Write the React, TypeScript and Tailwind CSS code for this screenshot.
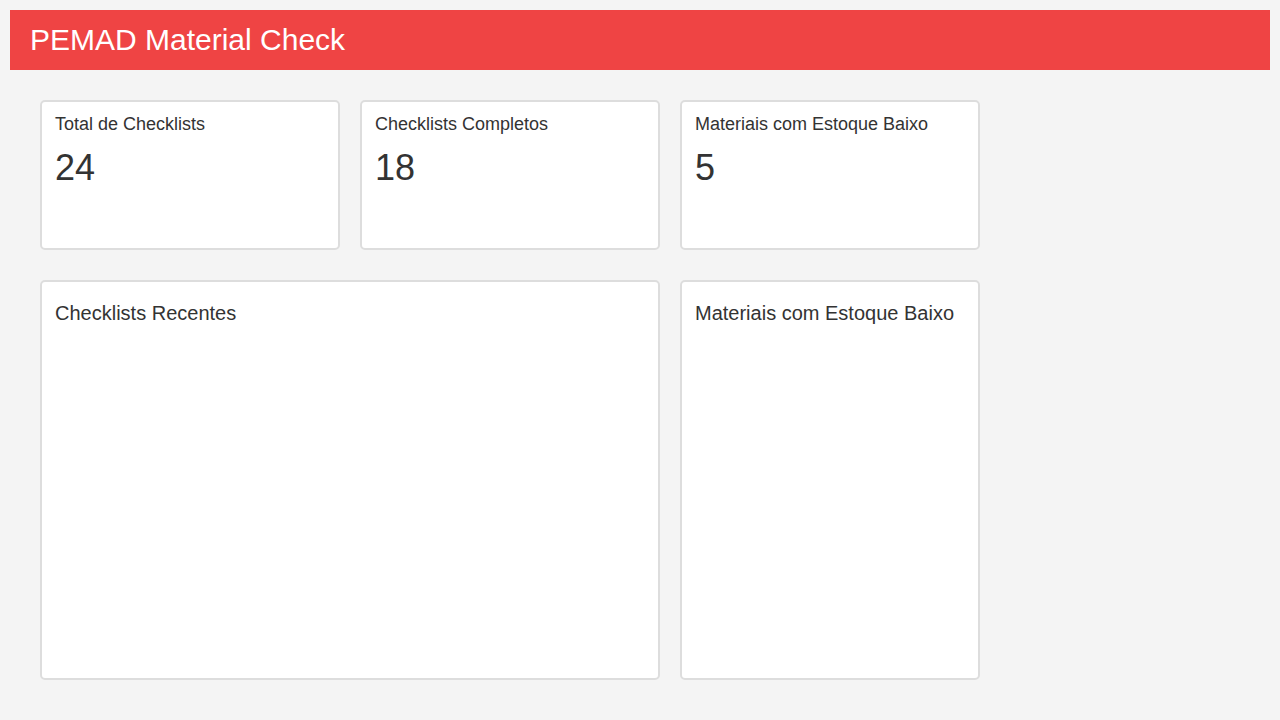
import React from "react";

const font = { fontFamily: '"Liberation Sans", Arial, sans-serif' };

function StatCard({ label, value }: { label: string; value: string }) {
  return (
    <div className="h-[150px] rounded-[5px] border-2 border-[#dddddd] bg-white px-[13px] pt-[12px]">
      <div className="text-[18px] leading-[1.15] text-[#333333]">{label}</div>
      <div className="mt-[12px] text-[36px] leading-[1.15] text-[#333333]">{value}</div>
    </div>
  );
}

function PanelCard({ title, className }: { title: string; className?: string }) {
  return (
    <div className={"h-[400px] rounded-[5px] border-2 border-[#dddddd] bg-white px-[13px] pt-[20px] " + (className ?? "")}>
      <div className="text-[20px] leading-[1.15] text-[#333333]">{title}</div>
    </div>
  );
}

export default function App() {
  return (
    <div className="min-h-[720px] bg-[#f4f4f4] p-[10px]" style={font}>
      <header className="flex h-[60px] items-center bg-[#ef4444] px-[20px]">
        <h1 className="text-[30px] leading-[1.15] text-white">PEMAD Material Check</h1>
      </header>
      <main className="p-[30px]">
        <div className="grid grid-cols-[300px_300px_300px] gap-x-[20px] gap-y-[30px]">
          <StatCard label="Total de Checklists" value="24" />
          <StatCard label="Checklists Completos" value="18" />
          <StatCard label="Materiais com Estoque Baixo" value="5" />
          <PanelCard title="Checklists Recentes" className="col-span-2" />
          <PanelCard title="Materiais com Estoque Baixo" />
        </div>
      </main>
    </div>
  );
}
